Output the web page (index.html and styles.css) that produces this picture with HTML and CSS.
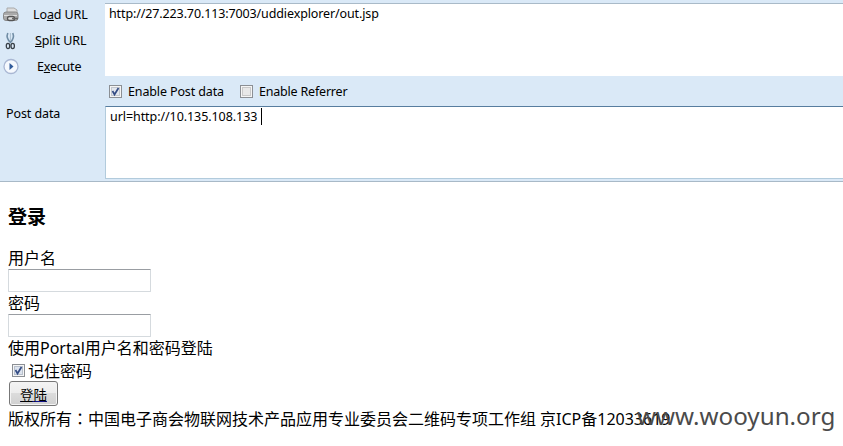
FILE: index.html
```html
<!DOCTYPE html>
<html lang="zh-CN">
<head>
<meta charset="utf-8">
<title>登录</title>
<link rel="stylesheet" href="styles.css">
</head>
<body>
<section class="hackbar">
  <aside class="actions">
    <div class="action"><svg class="icon" width="18" height="18" viewBox="0 0 18 18"><path d="M5 7V2h7l3 2v4" fill="#ddd" stroke="#aaa"/><rect x="1.5" y="6" width="14.5" height="8.5" rx="2.5" fill="#aaa" stroke="#888"/><path d="M2 9.5h13" stroke="#ddd"/><rect x="5.5" y="10.5" width="7" height="4" rx="2" fill="#ddd" stroke="#555" stroke-width="1.3"/><path d="M10 12.5h6" stroke="#666" stroke-width="1.5"/></svg><span class="load">Lo<u>a</u>d URL</span></div>
    <div class="action"><svg class="icon" width="18" height="18" viewBox="0 0 18 18"><path d="M5.8 1C4.500 4 5.500 8 9 11M10.800 1C12 4 11 8 8 11" fill="none" stroke="#708da5" stroke-width="1.6"/><path d="M8.400 1v8" stroke="#a9bfce"/><ellipse cx="6" cy="14" rx="1.700" ry="2.600" fill="none" stroke="#394047" stroke-width="1.300"/><ellipse cx="10.700" cy="14" rx="1.700" ry="2.600" fill="none" stroke="#394047" stroke-width="1.300"/></svg><span class="split"><u>S</u>plit URL</span></div>
    <div class="action"><svg class="icon" width="18" height="18" viewBox="0 0 18 18"><circle cx="9" cy="8.500" r="7" fill="#f5f9fe" stroke="#a9b7d3" stroke-width="1.300"/><path d="M7.500 5v7l4-3.500z" fill="#315c9b"/></svg><span class="execute">E<u>x</u>ecute</span></div>
    <div class="post-label">Post data</div>
  </aside>
  <div class="fields">
    <div class="url-box"><span class="url">http://27.223.70.113:7003/uddiexplorer/out.jsp</span></div>
    <div class="options">
      <svg class="box" width="13" height="13" viewBox="0 0 13 13"><rect x=".5" y=".5" width="12" height="12" fill="#f5f5f5" stroke="#8b8f94"/><rect x="2.500" y="2.500" width="8" height="8" fill="#e3e7ee" stroke="#c3c8cf"/><path d="M3.500 6l2 3.500L9.500 3" fill="none" stroke="#354d85" stroke-width="1.700"/></svg>
      <span class="enable-post">Enable Post data</span>
      <svg class="box" width="13" height="13" viewBox="0 0 13 13"><rect x=".5" y=".5" width="12" height="12" fill="#f5f5f5" stroke="#8b8f94"/><rect x="2.500" y="2.500" width="8" height="8" fill="#e8e8e8" stroke="#c9c9c9"/></svg>
      <span class="enable-ref">Enable Referrer</span>
    </div>
    <div class="post-box"><span class="post">url=http://10.135.108.133</span><i class="caret"></i></div>
  </div>
</section>
<main>
  <h3>登录</h3>
  <div class="label">用户名</div>
  <div class="input"></div>
  <div class="label">密码</div>
  <div class="input"></div>
  <div class="label">使用Portal用户名和密码登陆</div>
  <div class="remember"><svg width="13" height="13" viewBox="0 0 13 13"><rect x=".5" y=".5" width="12" height="12" fill="#f5f5f5" stroke="#8b8f94"/><rect x="2.500" y="2.500" width="8" height="8" fill="#dce3ee" stroke="#b8c0cc"/><path d="M3.500 6l2 3.500L9.500 3" fill="none" stroke="#354d85" stroke-width="1.700"/></svg>记住密码</div>
  <div class="login"><span>登陆</span></div>
  <footer><span>版权所有<span class="colon" lang="zh-TW">：</span>中国电子商会物联网技术产品应用专业委员会二维码专项工作组</span><span class="icp">京ICP备12033619</span></footer>
</main>
<div class="watermark">www.wooyun.org</div>
</body>
</html>
```
FILE: styles.css
```css
* { box-sizing: border-box; }
body { margin: 0; width: 843px; height: 446px; overflow: hidden; position: relative; background: #fff; color: #000; font: 16px "Noto Sans", "Noto Sans CJK SC", sans-serif; }
span { white-space: nowrap; }
.hackbar { display: flex; height: 182px; background: #dae9f7; border-bottom: 1px solid #a8b9c7; font-size: 12.5px; line-height: 18px; }
.actions { width: 105px; padding-top: 2px; }
.action { display: flex; align-items: center; height: 26px; padding-left: 2px; }
.icon { width: 18px; flex: none; }
.load { margin-left: 13px; letter-spacing: -.1px; }
.split { margin-left: 15px; letter-spacing: -.1px; }
.execute { margin-left: 17px; letter-spacing: -.2px; }
u { text-underline-offset: 1px; }
.post-label { margin: 25px 0 0 6px; letter-spacing: -.1px; }
.fields { flex: 1; padding-top: 3px; }
.url-box { height: 73px; background: #fff; border-top: 1px solid #a9bac8; padding: 1px 4px; }
.url { letter-spacing: -.12px; }
.options { display: flex; align-items: center; height: 30px; padding-left: 4px; }
.enable-post { margin-left: 6px; padding-top: 2px; width: 112px; letter-spacing: -.13px; }
.enable-ref { margin-left: 6px; padding-top: 2px; letter-spacing: -.2px; }
.box { flex: none; }
.post-box { display: flex; height: 73px; background: #fff; border: 1px solid #b2cbdc; border-top-color: #577d9f; border-right: 0; padding: 1px 4px; }
.post { letter-spacing: -.07px; }
.caret { width: 1px; height: 17px; background: #000; margin-left: 4px; }
main { padding: 23px 8px 0; }
h3 { margin: 0 0 18px; font-size: 19px; line-height: 24px; }
.label { height: 22px; line-height: 22px; white-space: nowrap; }
.input { width: 143px; height: 23px; border: 1px solid #d5dade; border-top-color: #999da2; border-radius: 1px; }
.remember { display: flex; align-items: center; height: 22px; padding-left: 4px; gap: 3px; }
.login { display: flex; align-items: center; justify-content: center; width: 49px; height: 25px; margin: 0 0 0 1px; border: 1px solid #777; border-radius: 3px; background: linear-gradient(#f4f4f4, #ececec 50%, #dcdcdc 50%, #d0d0d0); box-shadow: inset 0 0 0 1px #f4f4f4; font-size: 13.500px; line-height: 18px; }
.login span { position: relative; top: 1px; text-decoration: underline #13138c; text-underline-offset: 1px; }
footer { display: flex; gap: 4px; margin-top: 1px; line-height: 24px; }
.colon { font-family: "Noto Sans CJK TC", sans-serif; line-height: 1; }
.watermark { position: absolute; left: 637px; top: 400px; font-size: 24.2px; line-height: 32px; color: #4b4b4b; white-space: nowrap; }
```
